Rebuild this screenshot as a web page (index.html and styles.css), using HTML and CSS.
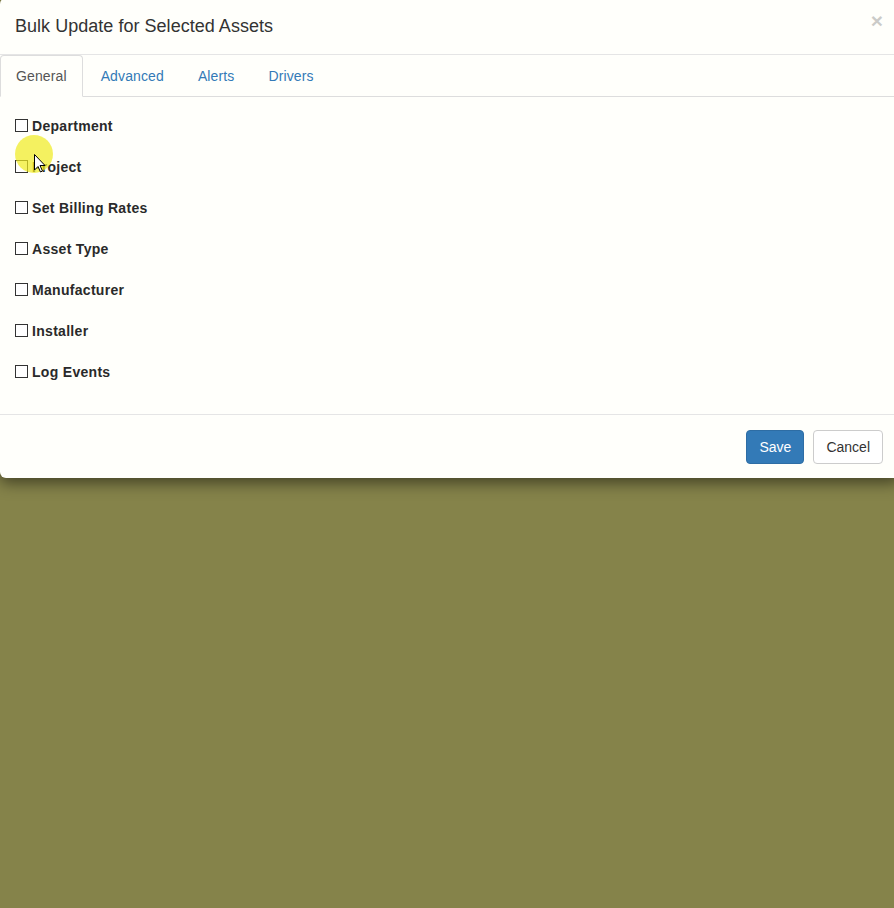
FILE: index.html
```html
<!DOCTYPE html>
<html>
<head>
<meta charset="utf-8">
<link rel="stylesheet" href="styles.css">
</head>
<body>
<div class="modal">
  <div class="modal-header">
    <h4 class="modal-title">Bulk Update for Selected Assets</h4>
    <span class="close">×</span>
  </div>
  <ul class="tabs">
    <li class="tab active">General</li>
    <li class="tab">Advanced</li>
    <li class="tab">Alerts</li>
    <li class="tab">Drivers</li>
  </ul>
  <div class="modal-body">
    <label class="row"><span class="box"></span>Department</label>
    <label class="row"><span class="box"></span>Project</label>
    <label class="row"><span class="box"></span>Set Billing Rates</label>
    <label class="row"><span class="box"></span>Asset Type</label>
    <label class="row"><span class="box"></span>Manufacturer</label>
    <label class="row"><span class="box"></span>Installer</label>
    <label class="row"><span class="box"></span>Log Events</label>
  </div>
  <div class="modal-footer">
    <button class="btn btn-primary">Save</button>
    <button class="btn btn-default">Cancel</button>
  </div>
  <div class="highlight"></div>
  <svg class="cursor" width="12" height="19" viewBox="0 0 12 19"><path d="M0.5 0.5 L0.5 16 L4 12.5 L6.5 18 L8.5 17 L6 11.5 L11 11.5 Z" fill="#fff" stroke="#000" stroke-width="1" stroke-linejoin="round"/></svg>
</div>
</body>
</html>
```
FILE: styles.css
```css
html, body {
  margin: 0;
  padding: 0;
  height: 100%;
  overflow: hidden;
}
body {
  background: #85834a;
  font-family: "Liberation Sans", Arial, sans-serif;
  font-size: 14px;
  line-height: 20px;
  color: #333;
}
.modal {
  position: relative;
  width: 900px;
  margin-top: -2px;
  background: #fffffb;
  border-radius: 6px;
  box-shadow: 0 5px 15px rgba(0,0,0,.5);
}
.modal-header {
  display: flex;
  align-items: center;
  justify-content: space-between;
  padding: 15px;
  border-bottom: 1px solid #e5e5e5;
}
.modal-title {
  margin: 0;
  font-size: 18px;
  font-weight: normal;
  line-height: 26px;
  color: #333;
  letter-spacing: 0.03px;
}
.close {
  font-size: 21px;
  font-weight: bold;
  color: #000;
  opacity: .2;
  line-height: 1;
  margin-right: 2px;
  margin-top: -12px;
}
.tabs {
  display: flex;
  list-style: none;
  margin: 0;
  padding: 0;
  border-bottom: 1px solid #ddd;
}
.tab {
  padding: 10px 15px;
  margin-right: 2px;
  margin-bottom: -1px;
  border: 1px solid transparent;
  border-radius: 4px 4px 0 0;
  color: #337ab7;
  letter-spacing: 0.12px;
}
.tab.active {
  color: #555;
  background: #fffffb;
  border-color: #ddd #ddd transparent;
}
.modal-body {
  display: flex;
  flex-direction: column;
  padding: 15px;
}
.row {
  display: flex;
  align-items: center;
  height: 41px;
  padding-bottom: 13px;
  box-sizing: border-box;
  font-weight: bold;
  color: #2a2a2a;
  letter-spacing: 0.3px;
}
.box {
  width: 11px;
  height: 11px;
  border: 1px solid #333;
  margin-right: 4px;
  background: #fff;
  position: relative;
  top: -1px;
}
.modal-footer {
  display: flex;
  justify-content: flex-end;
  gap: 9px;
  padding: 15px 15px 14px;
  border-top: 1px solid #e5e5e5;
  margin-right: 2px;
}
.btn {
  font-family: "Liberation Sans", Arial, sans-serif;
  font-size: 14px;
  line-height: 20px;
  padding: 6px 12px;
  border: 1px solid;
  border-radius: 4px;
  height: 34px;
}
.btn-primary {
  background: #337ab7;
  border-color: #2e6da4;
  color: #fff;
}
.btn-default {
  background: #fff;
  border-color: #ccc;
  color: #333;
}
.highlight {
  position: absolute;
  left: 15px;
  top: 137px;
  width: 38px;
  height: 38px;
  border-radius: 50%;
  background: rgba(240, 235, 30, 0.7);
}
.cursor {
  position: absolute;
  left: 34px;
  top: 156px;
}
```
